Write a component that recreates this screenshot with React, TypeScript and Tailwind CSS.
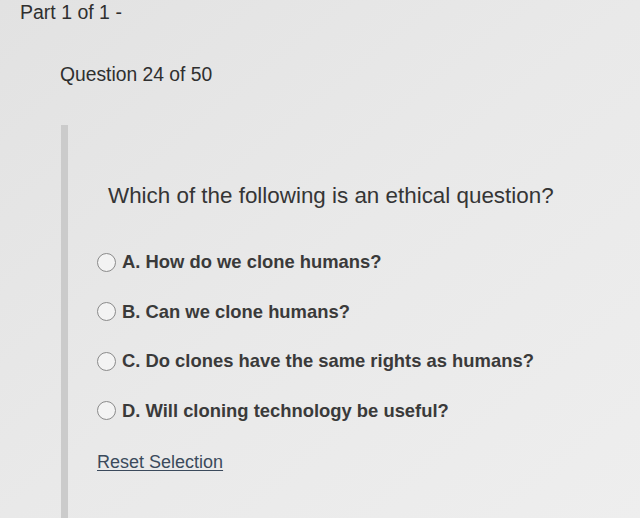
export default function App() {
  const options = [
    'A. How do we clone humans?',
    'B. Can we clone humans?',
    'C. Do clones have the same rights as humans?',
    'D. Will cloning technology be useful?',
  ];

  return (
    <div
      className="h-[518px] w-[640px] overflow-hidden bg-gradient-to-br from-[#e2e2e2] via-[#e9e9e9] to-[#eeeeee] text-[#2f2f2f]"
      style={{ fontFamily: '"Liberation Sans", Arial, sans-serif' }}
    >
      <div className="pl-[20px] pt-[1px] text-[19.5px] leading-[22px]">Part 1 of 1 -</div>
      <div className="pl-[60px] pt-[41px] text-[19.3px] leading-[22px]">Question 24 of 50</div>

      <div className="mt-[39px] ml-[61px] flex h-[400px]">
        <div className="w-[7px] shrink-0 bg-[#cbcbcb]" />
        <div className="pl-[29px]">
          <p className="pt-[57px] pl-[11px] text-[22.4px] leading-[28px] text-[#353535]">
            Which of the following is an ethical question?
          </p>

          <div className="mt-[41px] flex flex-col gap-[27.5px]">
            {options.map((o) => (
              <label key={o} className="flex items-center gap-[6px]">
                <span className="h-[19px] w-[19px] rounded-full border-[1.5px] border-[#8a8a8a] bg-[#f3f3f3]" />
                <span className="text-[18.4px] font-bold leading-[22px] text-[#3a3a3a]">{o}</span>
              </label>
            ))}
          </div>

          <a className="mt-[30px] inline-block text-[18px] leading-[20px] text-[#3b4a5c] underline underline-offset-2">
            Reset Selection
          </a>
        </div>
      </div>
    </div>
  );
}
